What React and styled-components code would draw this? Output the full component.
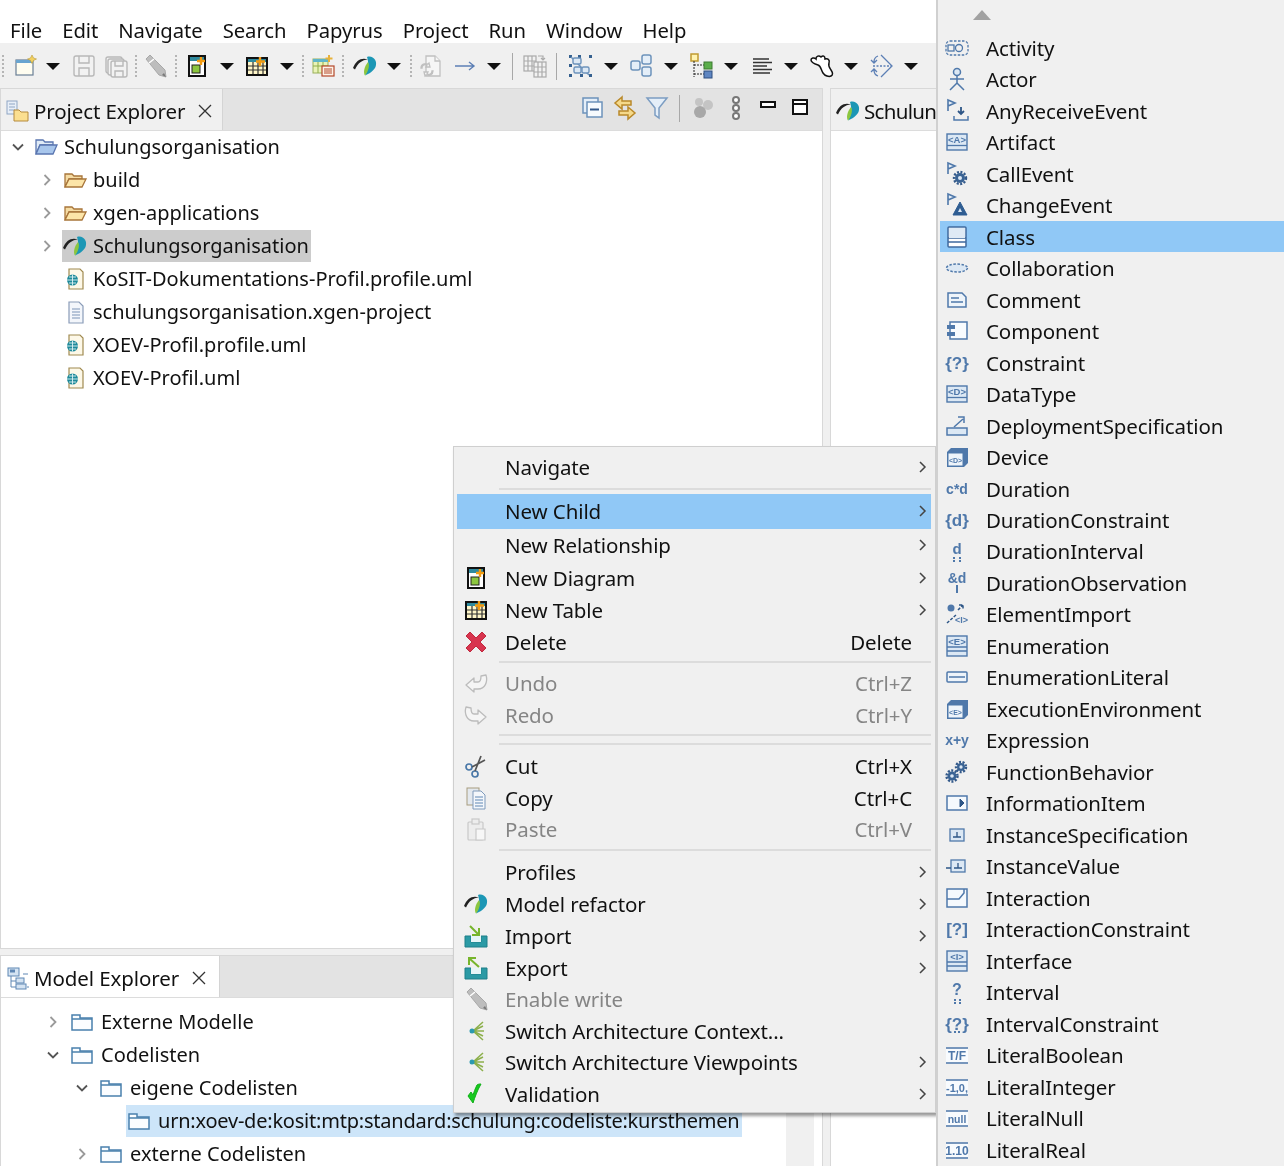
import React from 'react';
import styled, { createGlobalStyle } from 'styled-components';

const GlobalStyle = createGlobalStyle`
  html, body { margin: 0; padding: 0; background: #fff; }
  body { font-family: "Noto Sans", "Open Sans", sans-serif; color: #111; }
`;

const Page = styled.div`
  position: relative;
  width: 1284px;
  height: 1166px;
  overflow: hidden;
  background: #fff;
  font-size: 20.5px;
  letter-spacing: -0.1px;
  display: flex;
  flex-direction: column;
  filter: blur(0.35px);
`;

const MenuBar = styled.div`
  height: 43px;
  box-sizing: border-box;
  padding: 14.5px 0 0 10px;
  display: flex;
  gap: 20px;
  line-height: 30px;
  font-size: 20.25px;
  letter-spacing: -0.05px;
`;

const ToolBar = styled.div`
  height: 45px;
  box-sizing: border-box;
  padding-top: 1px;
  background: #f0f0f0;
  display: flex;
  align-items: center;
  flex: none;
`;

const Slot = styled.div`
  width: 0;
  margin-left: ${(p) => p.$dx}px;
  display: flex;
  justify-content: center;
  align-items: center;
`;

const Grip = styled.div`
  flex: none;
  height: 22px;
  border-left: 2px dotted #b5b5b5;
`;

const ToolSep = styled.div`
  flex: none;
  height: 27px;
  border-left: 1px solid #a8a8a8;
`;

const DropArrow = styled.div`
  flex: none;
  border-left: 7px solid transparent;
  border-right: 7px solid transparent;
  border-top: 7px solid #111;
`;

const Workbench = styled.div`
  flex: 1;
  min-height: 0;
  background: #f0f0f0;
  display: flex;
  gap: 7px;
`;

const LeftColumn = styled.div`
  width: 823px;
  flex: none;
  display: flex;
  flex-direction: column;
  gap: 6px;
`;

const Panel = styled.div`
  flex: ${(p) => p.$flex || 'none'};
  height: ${(p) => (p.$h ? `${p.$h}px` : 'auto')};
  background: #fff;
  border: 1px solid #d8d8d8;
  border-bottom: ${(p) => (p.$open ? 'none' : '1px solid #d8d8d8')};
  box-sizing: border-box;
  display: flex;
  flex-direction: column;
  min-height: 0;
`;

const TabBar = styled.div`
  height: 41px;
  flex: none;
  background: #e3e3e3;
  border-bottom: 1px solid #dcdcdc;
  display: flex;
  align-items: stretch;
`;

const Tab = styled.div`
  width: ${(p) => p.$w}px;
  flex: none;
  box-sizing: border-box;
  background: ${(p) => p.$bg || '#f0f0f0'};
  border-right: 1px solid #d4d4d4;
  padding: 2px 0 0 ${(p) => p.$pad || 4}px;
  display: flex;
  align-items: center;
  gap: 4px;
  white-space: nowrap;
  overflow: hidden;
  letter-spacing: ${(p) => p.$ls || -0.1}px;
`;

const ViewTools = styled.div`
  flex: 1;
  display: flex;
  align-items: center;
  margin-top: -3px;
`;

const CloseX = styled.svg`
  width: 16px;
  height: 16px;
  margin-left: 8px;
  flex: none;
`;

const TreeBody = styled.div`
  flex: 1;
  min-height: 0;
  display: flex;
`;

const Tree = styled.div`
  flex: 1;
  min-width: 0;
  margin-top: ${(p) => p.$top}px;
  font-size: 20px;
  letter-spacing: 0;
`;

const ScrollTrack = styled.div`
  width: 28px;
  margin-right: 8px;
  flex: none;
  background: #f0f0f0;
`;

const Row = styled.div`
  height: 33px;
  display: flex;
  align-items: center;
  padding-left: ${(p) => p.$x}px;
  white-space: nowrap;
`;

const Twist = styled.div`
  width: 18px;
  height: 18px;
  flex: none;
  margin-right: ${(p) => p.$gap}px;
  display: flex;
  align-items: center;
  justify-content: center;
`;

const Label = styled.div`
  display: flex;
  align-items: center;
  gap: ${(p) => p.$gap}px;
  height: 32px;
  padding: 0 ${(p) => (p.$sel ? 2 : 0)}px 0 ${(p) => (p.$sel ? 1 : 0)}px;
  margin-left: ${(p) => (p.$sel ? -1 : 0)}px;
  background: ${(p) => p.$sel || 'transparent'};
  letter-spacing: ${(p) => p.$ls || 0}px;
`;

const ContextMenu = styled.div`
  position: absolute;
  left: 453px;
  top: 446px;
  width: 483px;
  height: 667px;
  box-sizing: border-box;
  padding: 5px 4px 0 3px;
  background: #f0f0f0;
  border: 1px solid #cfcfcf;
  box-shadow: 2px 3px 3px rgba(0, 0, 0, 0.4);
`;

const MenuRow = styled.div`
  height: ${(p) => p.$h}px;
  box-sizing: border-box;
  padding: 0 3px 1.5px 0;
  display: flex;
  align-items: center;
  background: ${(p) => (p.$active ? '#90c8f6' : 'transparent')};
  color: ${(p) => (p.$off ? '#858585' : '#111')};
`;

const MenuIcon = styled.div`
  width: 38px;
  margin-right: 10px;
  flex: none;
  display: flex;
  justify-content: center;
  align-items: center;
`;

const MenuText = styled.div`
  flex: 1;
  white-space: nowrap;
`;

const Shortcut = styled.div`
  margin-right: 16px;
  white-space: nowrap;
`;

const SubArrow = styled.svg`
  width: 10px;
  height: 14px;
  flex: none;
`;

const MenuSep = styled.div`
  height: ${(p) => p.$h}px;
  box-sizing: border-box;
  padding: ${(p) => p.$top}px 0 0 42px;
  &::after {
    content: '';
    display: block;
    height: 2px;
    background: #dcdcdc;
  }
`;

const SubMenu = styled.div`
  position: absolute;
  left: 936px;
  top: 0;
  right: 0;
  bottom: 0;
  background: #f0f0f0;
  border-left: 2px solid #d0d0d0;
  box-sizing: border-box;
`;

const ScrollUp = styled.div`
  height: 32px;
  padding: 10px 0 0 35px;
  box-sizing: border-box;
  &::before {
    content: '';
    display: block;
    width: 0;
    border-left: 9px solid transparent;
    border-right: 9px solid transparent;
    border-bottom: 10px solid #a2a2a2;
  }
`;

const SubItem = styled.div`
  height: 31.49px;
  display: flex;
  align-items: center;
  margin-left: 2px;
  padding-left: 5px;
  gap: 17px;
  white-space: nowrap;
  background: ${(p) => (p.$active ? '#90c8f6' : 'transparent')};
`;

const Ico = styled.svg.attrs((p) => ({ viewBox: `0 0 ${p.$s || 24} ${p.$s || 24}`, width: p.$s || 24, height: p.$s || 24 }))`
  flex: none;
  display: block;
  overflow: visible;
`;

const B = '#4f78aa';
const L = '#dce8f4';

const GlyphText = styled.text`
  font-family: "Liberation Sans", sans-serif;
  font-weight: 700;
  fill: ${B};
  text-anchor: middle;
  letter-spacing: 0;
`;

const Logo = () => (
  <g>
    <path d="M0 14C3 6 9 3 15 5.500C9 6 5 9 2 15.500z" fill="#222" />
    <path d="M14 3C20 1 25 7 22.500 13C20.500 17 16 20 12 21.500C15.500 15 16 9 14 3z" fill="#1c97b5" />
    <path d="M12 21.500C10 19 11 13 15 8C17 11 15.500 17 12 21.500z" fill="#8cc63f" />
  </g>
);

const NewWizard = () => (
  <g>
    <rect x="3" y="6" width="17" height="15" fill="#fffdf0" stroke="#6a7f96" strokeWidth="1.2" />
    <rect x="3" y="6" width="17" height="3" fill="#6aa5d0" />
    <path d="M19 1l1.5 3 3 1-3 1.500-1.500 3-1.500-3-3-1.500 3-1z" fill="#f3d060" stroke="#b79a3a" strokeWidth=".6" />
  </g>
);

const NewDiagram = () => (
  <g>
    <rect x="4" y="2" width="16" height="20" fill="#fff" stroke="#111" strokeWidth="2" />
    <rect x="5" y="3" width="14" height="4" fill="#2f8a9e" />
    <rect x="7" y="11" width="8" height="8" fill="#8cc63f" stroke="#222" />
    <path d="M16 3v8M12 7h8" stroke="#f39c12" strokeWidth="2.4" />
  </g>
);

const NewTable = () => (
  <g>
    <rect x="2" y="4" width="20" height="17" fill="#fff6c8" stroke="#111" strokeWidth="2" />
    <rect x="3" y="5" width="18" height="3" fill="#2f8a9e" />
    <path d="M3 12h18M3 16h18M8 8v12M13 8v12M18 8v12" stroke="#333" strokeWidth="1.2" />
    <path d="M15 3v9M11 7.500h9" stroke="#f39c12" strokeWidth="2.4" />
  </g>
);

const TablePlus = () => (
  <g>
    <rect x="2" y="5" width="15" height="14" fill="#eaf3b8" stroke="#9ab05a" />
    <rect x="2" y="5" width="15" height="3" fill="#5fb5c8" />
    <path d="M2 12h15M7 8v11M12 8v11" stroke="#8fae4a" />
    <rect x="11" y="12" width="12" height="10" fill="#fdf3e8" stroke="#b5482a" strokeWidth="1.2" />
    <path d="M13 15h8M13 17h8M13 19h8" stroke="#b5482a" />
    <path d="M18 1v7M14.500 4.500h7" stroke="#e8b23a" strokeWidth="2" />
  </g>
);

const SaveIcon = ({ stack }) => (
  <g fill="#f2f2f2" stroke="#b8b8b8" strokeWidth="1.4">
    {stack && <rect x="1" y="3" width="16" height="16" rx="2" />}
    {stack && <rect x="3" y="5" width="16" height="16" rx="2" />}
    <rect x={stack ? 6 : 2} y={stack ? 7 : 2} width={stack ? 16 : 20} height={stack ? 16 : 20} rx="2" />
    <path d={stack ? 'M10 7v5h8V7M10 23v-6h8v6' : 'M7 2v7h10V2M7 22v-8h10v8'} fill="none" />
  </g>
);

const Pencil = () => (
  <g>
    <path d="M3 5l4-4 15 15 1 7-7-2z" fill="#bdbdbd" stroke="#a8a8a8" />
    <path d="M6 9l5-4" stroke="#fff" strokeWidth="1.5" />
    <path d="M19 21l4 2-2-4z" fill="#777" />
  </g>
);

const DocGhost = () => (
  <g fill="#f6f6f6" stroke="#c0c0c0" strokeWidth="1.3">
    <path d="M7 2h9l5 5v15H7z" />
    <path d="M16 2v5h5" />
    <path d="M3 14c0-3 3-4 5-3l-1 2 4 0-1-4-1 1c-3-1-7 0-7 4zM13 17c0 3-3 4-5 3l1-2-4 0 1 4 1-1c3 1 7 0 7-4z" />
  </g>
);

const ArrowRightThin = () => (
  <path d="M2 12h19M16 8l5 4-5 4" fill="none" stroke="#5c7fb5" strokeWidth="1.4" />
);

const Compare = () => (
  <g fill="#f2f2f2" stroke="#aaa" strokeWidth="1.2">
    <rect x="1" y="2" width="12" height="15" />
    <path d="M1 7h12M1 12h12M5 2v15M9 2v15" />
    <rect x="11" y="8" width="12" height="15" />
    <path d="M11 13h12M11 18h12M15 8v15M19 8v15" />
    <path d="M15 2h5v4M18 4l2 2 2-2" fill="none" />
  </g>
);

const Cluster = () => (
  <g>
    <g fill="#35608f">
      <rect x="1" y="1" width="3" height="3" /><rect x="10" y="1" width="3" height="3" /><rect x="21" y="1" width="3" height="3" />
      <rect x="1" y="10" width="3" height="3" /><rect x="21" y="20" width="3" height="3" />
      <rect x="1" y="20" width="3" height="3" /><rect x="12" y="20" width="3" height="3" />
    </g>
    <g fill="#dce8f4" stroke="#6c92bb" strokeWidth="1.4">
      <path d="M3 3l18 18" />
      <rect x="5" y="4" width="8" height="6" rx="1.500" />
      <rect x="6" y="13" width="7" height="6" rx="1.500" />
      <rect x="14" y="13" width="7" height="6" rx="1.500" />
    </g>
  </g>
);

const Boxes = () => (
  <g fill="#e4eef8" stroke="#6c92bb" strokeWidth="1.5">
    <rect x="1" y="7" width="9" height="9" rx="2" />
    <rect x="12" y="1" width="9" height="9" rx="2" />
    <rect x="12" y="13" width="9" height="9" rx="2" />
  </g>
);

const TreeLayout = () => (
  <g>
    <rect x="1" y="0" width="7" height="7" fill="#fff3b0" stroke="#c09a30" strokeWidth="1.5" />
    <path d="M4 7v16M4 11h10M4 20h10" stroke="#222" strokeDasharray="2 1" />
    <rect x="14" y="8" width="8" height="7" fill="#5bae4a" stroke="#3c7a30" />
    <rect x="14" y="17" width="8" height="7" fill="#5f86c2" stroke="#2f4f80" />
  </g>
);

const Lines = () => (
  <path d="M3 5h16M3 8.500h19M3 12h14M3 15.500h19M3 19h17" stroke="#333" strokeWidth="1.4" fill="none" />
);

const Ghost = () => (
  <path d="M1 6c0-2 3-3 5-1 0-3 3-4 5-2 2-2 4-1 4 2 3-1 5 1 4 4s0 4 2 7 2 5 0 6-6 0-8-3-2-7-5-8-7-3-7-5z" fill="#fff" stroke="#111" strokeWidth="1.500" />
);

const DiamondFlow = () => (
  <g fill="none" stroke="#5c7fb5" strokeWidth="1.3">
    <path d="M11 1l11 11-11 11" />
    <path d="M3 12h18" strokeDasharray="2 1.500" />
    <path d="M8 2c-3 1-4 3-4 6M1 6l3 3 3-3M8 22c-3-1-4-3-4-6M1 18l3-3 3 3" />
  </g>
);

const Collapse = () => (
  <g fill="#e4eef8" stroke="#6c92bb" strokeWidth="1.5">
    <rect x="2" y="2" width="15" height="15" />
    <rect x="6" y="6" width="15" height="15" fill="#f6fafd" />
    <path d="M9 13.500h9" stroke="#33598a" strokeWidth="2" />
  </g>
);

const LinkArrows = () => (
  <g fill="#f5d98a" stroke="#b9892a" strokeWidth="1.5">
    <path d="M9 1L2 7l7 6V9h9V5H9z" />
    <path d="M15 11l7 6-7 6v-4H6v-4h9z" />
  </g>
);

const Funnel = () => (
  <path d="M2 2h20l-8 10v10l-4-3v-7z" fill="#e4eef8" stroke="#7c9dc2" strokeWidth="1.5" />
);

const GrayBalls = () => (
  <g fill="#a8a8a8">
    <circle cx="8" cy="6" r="4" fill="#c4c4c4" /><circle cx="17" cy="9" r="5" fill="#c4c4c4" /><circle cx="9" cy="16" r="6" />
  </g>
);

const Chain = () => (
  <g fill="#fff" stroke="#777" strokeWidth="2">
    <circle cx="12" cy="4" r="3" /><circle cx="12" cy="12" r="3" /><circle cx="12" cy="20" r="3" />
  </g>
);

const MinBtn = () => <rect x="5" y="6" width="14" height="5" fill="#fff" stroke="#111" strokeWidth="2" />;
const MaxBtn = () => (
  <g fill="#fff" stroke="#111" strokeWidth="2">
    <rect x="4" y="4" width="14" height="14" />
    <path d="M4 8h14" />
  </g>
);

const ExplorerIcon = () => (
  <g>
    <rect x="1" y="2" width="10" height="13" fill="#e8eff8" stroke="#8fa6c4" />
    <path d="M3 5h6M3 8h6M3 11h6" stroke="#8fa6c4" />
    <path d="M8 11h5l2 2h7v9H8z" fill="#fbdf90" stroke="#b58a3c" />
  </g>
);

const ModelIcon = () => (
  <g>
    <rect x="2" y="2" width="11" height="8" fill="#d4e3f2" stroke="#5f87b4" />
    <rect x="4" y="3.500" width="5" height="3" fill="#5f87b4" />
    <path d="M5 10v11h5M5 15h5" stroke="#5f87b4" fill="none" />
    <rect x="10" y="12" width="8" height="5" fill="#d4e3f2" stroke="#5f87b4" />
    <rect x="10" y="18" width="10" height="5" fill="#d4e3f2" stroke="#5f87b4" />
    <path d="M17 8h5M21 21h2" stroke="#5f87b4" />
  </g>
);

const FolderOpen = () => (
  <g>
    <path d="M2 6h7l2 2h8v3H6L2 19z" fill="#f5dca4" stroke="#a8753a" strokeWidth="1.3" />
    <path d="M6 11h17l-4 8H2z" fill="#fce5a8" stroke="#a8753a" strokeWidth="1.3" />
  </g>
);

const FolderBlueOpen = () => (
  <g>
    <path d="M2 5h7l2 2h8v3H6l-4 9z" fill="#e0ebf7" stroke="#5a76b0" strokeWidth="1.3" />
    <path d="M6 10h17l-4 9H2z" fill="#a8c6ec" stroke="#5a76b0" strokeWidth="1.3" />
  </g>
);

const FolderPlain = () => (
  <g>
    <path d="M2 5h8v3h12v12H2z" fill="#fbfdff" stroke="#4a80ad" strokeWidth="1.5" />
    <path d="M2 9h20" stroke="#4a80ad" strokeWidth="1.5" />
  </g>
);

const UmlFile = () => (
  <g>
    <path d="M6 2h11l3 3v17H6z" fill="#fdf8e8" stroke="#a08a50" strokeWidth="1.2" />
    <circle cx="9.500" cy="13" r="5.500" fill="#1f8a9a" />
    <path d="M4 13h11M9.500 7.500v11M6 10h7M6 16h7" stroke="#dff3f5" strokeWidth=".9" />
  </g>
);

const TextFile = () => (
  <g>
    <path d="M6 2h10l4 4v17H6z" fill="#f3f6fb" stroke="#8a9cb8" strokeWidth="1.2" />
    <path d="M9 9h8M9 12h8M9 15h8M9 18h8" stroke="#7d94b8" strokeWidth="1.2" />
  </g>
);

const DeleteX = () => (
  <path d="M6 2l6 6 6-6 4 4-6 6 6 6-4 4-6-6-6 6-4-4 6-6-6-6z" fill="#d8344e" stroke="#c0283e" strokeWidth="1" strokeLinejoin="round" />
);

const UndoArrow = () => (
  <path d="M2 14l8-7v4h4c2 0 3-2 3-6l5-1c2 7-1 14-8 14h-4v3z" fill="#f5f5f5" stroke="#bcbcbc" strokeWidth="1.3" strokeLinejoin="round" />
);

const RedoArrow = () => (
  <path d="M22 14l-8-7v4h-4c-2 0-3-2-3-6L2 4c-2 7 1 14 8 14h4v3z" fill="#f5f5f5" stroke="#bcbcbc" strokeWidth="1.3" strokeLinejoin="round" />
);

const Scissors = () => (
  <g fill="none" stroke="#4a78a8" strokeWidth="1.7">
    <circle cx="5" cy="13" r="3" />
    <circle cx="11" cy="20" r="3" />
    <path d="M8 13l13-7M11 17l6-15" stroke="#555" />
  </g>
);

const CopyIcon = () => (
  <g>
    <rect x="3" y="2" width="12" height="17" fill="#e3e8ee" stroke="#a79c7e" />
    <path d="M9 5h8l4 4v14H9z" fill="#f4f7fb" stroke="#7e9abb" />
    <path d="M11 11h8M11 14h8M11 17h8M11 20h8" stroke="#5f87b4" />
  </g>
);

const PasteIcon = () => (
  <g fill="#ededed" stroke="#c8c8c8" strokeWidth="1.2">
    <rect x="4" y="5" width="15" height="18" rx="1" />
    <rect x="8" y="2" width="7" height="5" />
    <path d="M12 12h9v11h-9z" fill="#f7f7f7" />
  </g>
);

const Tray = ({ up }) => (
  <g>
    <path d="M1 12h6v6h10v-6h6v11H1z" fill="#2b9aa5" stroke="#1f7e88" />
    <rect x="7" y="12" width="10" height="6" fill="#e6f5f7" />
    {up ? (
      <path d="M15 11L6 3M5 9V2h7" fill="none" stroke="#77b52c" strokeWidth="2" />
    ) : (
      <path d="M6 2l8 8M8 11h7V4" fill="none" stroke="#77b52c" strokeWidth="2" />
    )}
  </g>
);

const Switcher = () => (
  <g stroke="#8db04c" strokeWidth="1.6" fill="none">
    <path d="M9 12L19 3M9 12l10-5M9 12h11M9 12l10 5M9 12l10 9" />
    <circle cx="8" cy="12" r="2.500" fill="#2c9ab0" stroke="none" />
  </g>
);

const CheckMark = () => (
  <path d="M4 14l5 7c2-6 4-12 8-19-1 0-3 0-4 1-2 4-3 7-4 10l-2-3z" fill="#16c91e" stroke="#10b018" strokeWidth="1" />
);

const Flag = () => <path d="M3 1v11M3 1l7 3-7 3z" fill="#e5edf6" stroke={B} strokeWidth="1.6" />;

const Gear = ({ cx, cy, r }) => (
  <g>
    <circle cx={cx} cy={cy} r={r} fill="none" stroke="#33598a" strokeWidth="2.4" strokeDasharray="2 1.500" />
    <circle cx={cx} cy={cy} r={r - 1} fill="#3a6394" />
    <circle cx={cx} cy={cy} r={r / 3} fill="#dce8f4" />
  </g>
);

const CodeBox = ({ ch, line, lines }) => (
  <g>
    <rect x="2" y={lines ? 2 : 4} width="20" height={lines ? 20 : 16} fill={L} stroke={B} strokeWidth="1.4" />
    <GlyphText x="12" y={lines ? 11 : 13} fontSize="9.500">{`<${ch}>`}</GlyphText>
    {line && <path d={lines ? 'M2 13h20M2 17h20' : 'M2 15.500h20'} stroke={B} strokeWidth="1.3" />}
  </g>
);

const Box3d = ({ ch }) => (
  <g>
    <path d="M2 7l4-4h17v15l-4 4H2z" fill={B} />
    <rect x="3" y="8" width="15" height="13" fill="#eef4fa" stroke={B} />
    <GlyphText x="10.500" y="17.500" fontSize="7">{`<${ch}>`}</GlyphText>
  </g>
);

const Word = ({ t, size = 10, y = 16 }) => <GlyphText x="12" y={y} fontSize={size}>{t}</GlyphText>;

const Ruled = ({ t, size = 8.500 }) => (
  <g>
    <path d="M1 5h22M1 20h22" stroke={B} strokeWidth="1.500" />
    <rect x="1" y="6" width="22" height="13" fill="#f8fbfe" />
    <GlyphText x="12" y="16.500" fontSize={size}>{t}</GlyphText>
  </g>
);

const subIcons = {
  Activity: (
    <g fill="none" stroke={B} strokeWidth="1.3">
      <rect x="1" y="5" width="22" height="14" rx="4" strokeDasharray="2.500 1.500" />
      <rect x="3" y="9" width="6" height="6" />
      <circle cx="14" cy="12" r="3.500" />
    </g>
  ),
  Actor: (
    <g fill="none" stroke={B} strokeWidth="1.500">
      <circle cx="12" cy="5" r="3.500" fill={L} />
      <path d="M12 9v7M5 12h14M5 23l7-7 7 7" />
    </g>
  ),
  AnyReceiveEvent: (
    <g>
      <Flag />
      <path d="M16 8v7M13 12l3 3 3-3" fill="none" stroke="#2d5586" strokeWidth="1.800" />
      <path d="M9 17v4h14v-4" fill="none" stroke={B} strokeWidth="1.500" />
    </g>
  ),
  Artifact: <CodeBox ch="A" line />,
  CallEvent: (
    <g>
      <Flag />
      <Gear cx={15} cy={16} r={6} />
    </g>
  ),
  ChangeEvent: (
    <g>
      <Flag />
      <path d="M15 9l7 13H8z" fill="#2f5d92" stroke="#2f5d92" />
      <path d="M15 15l2 4h-4z" fill={L} />
    </g>
  ),
  Class: (
    <g>
      <rect x="3" y="2" width="18" height="20" rx="1" fill="#fff" stroke="#3f6a9e" strokeWidth="1.500" />
      <path d="M3 13h18M3 17h18" stroke="#3f6a9e" strokeWidth="1.300" />
      <rect x="4" y="3" width="16" height="10" fill="#dfeaf5" />
    </g>
  ),
  Collaboration: <ellipse cx="12" cy="12" rx="10.500" ry="4" fill={L} stroke={B} strokeWidth="1.500" strokeDasharray="2.500 1.500" />,
  Comment: (
    <g>
      <path d="M3 5h14l4 4v10H3z" fill="#eef4fa" stroke={B} strokeWidth="1.500" />
      <path d="M6 10h8M6 14h12" stroke={B} strokeWidth="1.300" />
    </g>
  ),
  Component: (
    <g>
      <rect x="5" y="3" width="17" height="17" fill="#f8fbfe" stroke={B} strokeWidth="1.500" />
      <rect x="2" y="6" width="8" height="4" fill={B} />
      <rect x="2" y="13" width="8" height="4" fill={B} />
    </g>
  ),
  Constraint: <Word t="{?}" size={17} y={18} />,
  DataType: <CodeBox ch="D" line />,
  DeploymentSpecification: (
    <g fill="none" stroke={B} strokeWidth="1.500">
      <path d="M2 14h20v7H2z" fill={L} />
      <path d="M9 13l9-8M13 3h6v6" />
    </g>
  ),
  Device: <Box3d ch="D" />,
  Duration: <Word t="c*d" size={14} y={17} />,
  DurationConstraint: <Word t="{d}" size={17} y={18} />,
  DurationInterval: (
    <g>
      <Word t="d" size={15} y={15} />
      <path d="M8 19h2M14 19h2M8 22h2M14 22h2" stroke={B} strokeWidth="2" />
    </g>
  ),
  DurationObservation: (
    <g>
      <Word t="&d" size={14} y={12} />
      <path d="M12 14v8" stroke={B} strokeWidth="2" />
    </g>
  ),
  ElementImport: (
    <g>
      <circle cx="6" cy="6" r="3.500" fill={B} />
      <path d="M13 8l5-5M14 3h4v4M2 21l9-8" fill="none" stroke="#2d5586" strokeWidth="1.500" strokeDasharray="3 1.500" />
      <GlyphText x="16.500" y="21" fontSize="9">{'<I>'}</GlyphText>
    </g>
  ),
  Enumeration: <CodeBox ch="E" line lines />,
  EnumerationLiteral: (
    <g>
      <rect x="2" y="7" width="20" height="10" rx="1" fill="#eef4fa" stroke={B} strokeWidth="1.500" />
      <path d="M4 12h16" stroke={B} strokeWidth="1.500" />
    </g>
  ),
  ExecutionEnvironment: <Box3d ch="E" />,
  Expression: <Word t="x+y" size={14} y={17} />,
  FunctionBehavior: (
    <g>
      <Gear cx={16} cy={7} r={5} />
      <Gear cx={7} cy={16} r={5.500} />
    </g>
  ),
  InformationItem: (
    <g>
      <rect x="2" y="5" width="20" height="14" fill="#f5f9fd" stroke={B} strokeWidth="1.500" />
      <path d="M15 8l4 4-4 4z" fill="#2d5586" stroke="#2d5586" />
    </g>
  ),
  InstanceSpecification: (
    <g>
      <rect x="5" y="6" width="14" height="12" fill={L} stroke={B} strokeWidth="1.300" />
      <path d="M12 9v5M8 14h8" stroke="#2d5586" strokeWidth="1.300" />
    </g>
  ),
  InstanceValue: (
    <g>
      <rect x="6" y="6" width="14" height="12" fill={L} stroke={B} strokeWidth="1.300" />
      <path d="M13 9v5M9 14h8M1 14h5" stroke="#2d5586" strokeWidth="1.300" />
    </g>
  ),
  Interaction: (
    <g>
      <rect x="2" y="3" width="20" height="18" fill="#f5f9fd" stroke={B} strokeWidth="1.500" />
      <path d="M2 13h12l5-6V3" fill="none" stroke={B} strokeWidth="1.500" />
    </g>
  ),
  InteractionConstraint: <Word t="[?]" size={17} y={18} />,
  Interface: <CodeBox ch="I" line lines />,
  Interval: (
    <g>
      <Word t="?" size={16} y={15} />
      <path d="M9 20h2M14 20h2M9 23h2M14 23h2" stroke={B} strokeWidth="2" />
    </g>
  ),
  IntervalConstraint: (
    <g>
      <Word t="{?}" size={17} y={18} />
      <path d="M9 20h2M13 20h2" stroke={B} strokeWidth="2" />
    </g>
  ),
  LiteralBoolean: <Ruled t="T/F" size={12} />,
  LiteralInteger: <Ruled t="-1,0," size={11} />,
  LiteralNull: <Ruled t="null" size={10.500} />,
  LiteralReal: <Ruled t="1.10" size={12} />,
};

const subItems = Object.keys(subIcons);

const menuNames = ['File', 'Edit', 'Navigate', 'Search', 'Papyrus', 'Project', 'Run', 'Window', 'Help'];

// centre x of every toolbar part
const tools = [
  [3, 'grip'], [25, <NewWizard />], [53, 'drop'], [84, <SaveIcon />], [117, <SaveIcon stack />], [136, 'grip'],
  [155, <Pencil />], [176, 'grip'], [197, <NewDiagram />], [227, 'drop'], [257, <NewTable />], [287, 'drop'],
  [303, 'grip'], [323, <TablePlus />], [343, 'grip'], [365, <Logo />], [394, 'drop'], [411, 'grip'],
  [431, <DocGhost />], [465, <ArrowRightThin />], [494, 'drop'], [512, 'sep'], [535, <Compare />], [556, 'sep'],
  [580, <Cluster />], [611, 'drop'], [642, <Boxes />], [671, 'drop'], [702, <TreeLayout />], [731, 'drop'],
  [762, <Lines />], [791, 'drop'], [822, <Ghost />], [851, 'drop'], [882, <DiamondFlow />], [911, 'drop'],
];

const viewTools = [
  [592, <Collapse />], [624, <LinkArrows />], [656, <Funnel />], [678, 'sep'], [702, <GrayBalls />],
  [735, <Chain />], [767, <MinBtn />], [800, <MaxBtn />],
];

const renderPart = (part) => {
  if (part === 'grip') return <Grip />;
  if (part === 'drop') return <DropArrow />;
  if (part === 'sep') return <ToolSep />;
  return <Ico>{part}</Ico>;
};

const renderTools = (list, start) => {
  let prev = start;
  return list.map(([x, part]) => {
    const dx = x - prev;
    prev = x;
    return <Slot key={x} $dx={dx}>{renderPart(part)}</Slot>;
  });
};

const Close = () => (
  <CloseX viewBox="0 0 16 16">
    <path d="M2 2l12 12M14 2L2 14" stroke="#333" strokeWidth="1.300" />
  </CloseX>
);

const Chevron = ({ open }) => (
  <svg width="14" height="14" viewBox="0 0 14 14">
    <path d={open ? 'M2 4.500l5 5 5-5' : 'M4.500 2l5 5-5 5'} fill="none" stroke={open ? '#555' : '#9a9a9a'} strokeWidth="1.800" />
  </svg>
);

const projectRows = [
  { x: 8, open: true, icon: <FolderBlueOpen />, text: 'Schulungsorganisation' },
  { x: 37, closed: true, icon: <FolderOpen />, text: 'build' },
  { x: 37, closed: true, icon: <FolderOpen />, text: 'xgen-applications' },
  { x: 37, closed: true, icon: <Logo />, text: 'Schulungsorganisation', sel: '#cccccc' },
  { x: 37, icon: <UmlFile />, text: 'KoSIT-Dokumentations-Profil.profile.uml' },
  { x: 37, icon: <TextFile />, text: 'schulungsorganisation.xgen-project' },
  { x: 37, icon: <UmlFile />, text: 'XOEV-Profil.profile.uml' },
  { x: 37, icon: <UmlFile />, text: 'XOEV-Profil.uml' },
];

const modelRows = [
  { x: 43, closed: true, text: 'Externe Modelle' },
  { x: 43, open: true, text: 'Codelisten' },
  { x: 72, open: true, text: 'eigene Codelisten' },
  { x: 100, text: 'urn:xoev-de:kosit:mtp:standard:schulung:codeliste:kursthemen', sel: '#cde5f9', ls: -0.22 },
  { x: 72, closed: true, text: 'externe Codelisten' },
];

const TreeRow = ({ row, folderIcon, twistGap, labelGap }) => (
  <Row $x={row.x}>
    <Twist $gap={twistGap}>
      {(row.open || row.closed) && <Chevron open={row.open} />}
    </Twist>
    <Label $gap={labelGap} $sel={row.sel} $ls={row.ls}>
      <Ico>{row.icon || folderIcon}</Ico>
      {row.text}
    </Label>
  </Row>
);

const contextItems = [
  { t: 'Navigate', h: 32, sub: true },
  { sep: 10, top: 4 },
  { t: 'New Child', h: 35, sub: true, active: true },
  { t: 'New Relationship', h: 34, sub: true },
  { t: 'New Diagram', h: 32, sub: true, icon: <NewDiagram /> },
  { t: 'New Table', h: 32, sub: true, icon: <NewTable /> },
  { t: 'Delete', h: 31, key: 'Delete', icon: <DeleteX /> },
  { sep: 10, top: 3 },
  { t: 'Undo', h: 32, key: 'Ctrl+Z', off: true, icon: <UndoArrow /> },
  { t: 'Redo', h: 31, key: 'Ctrl+Y', off: true, icon: <RedoArrow /> },
  { sep: 7, top: 3 },
  { sep: 13, top: 5 },
  { t: 'Cut', h: 32, key: 'Ctrl+X', icon: <Scissors /> },
  { t: 'Copy', h: 31, key: 'Ctrl+C', icon: <CopyIcon /> },
  { t: 'Paste', h: 32, key: 'Ctrl+V', off: true, icon: <PasteIcon /> },
  { sep: 10, top: 3 },
  { t: 'Profiles', h: 33, sub: true },
  { t: 'Model refactor', h: 32, sub: true, icon: <Logo /> },
  { t: 'Import', h: 32, sub: true, icon: <Tray /> },
  { t: 'Export', h: 31, sub: true, icon: <Tray up /> },
  { t: 'Enable write', h: 32, off: true, icon: <Pencil /> },
  { t: 'Switch Architecture Context...', h: 31, icon: <Switcher /> },
  { t: 'Switch Architecture Viewpoints', h: 32, sub: true, icon: <Switcher /> },
  { t: 'Validation', h: 32, sub: true, icon: <CheckMark /> },
];

const App = () => {
  return (
    <Page>
      <GlobalStyle />
      <MenuBar>
        {menuNames.map((m) => <div key={m}>{m}</div>)}
      </MenuBar>
      <ToolBar>{renderTools(tools, 0)}</ToolBar>
      <Workbench>
        <LeftColumn>
          <Panel $flex="1">
            <TabBar>
              <Tab $w={222} $pad={5}>
                <Ico><ExplorerIcon /></Ico>
                Project Explorer
                <Close />
              </Tab>
              <ViewTools>{renderTools(viewTools, 222)}</ViewTools>
            </TabBar>
            <Tree $top={-1}>
              {projectRows.map((row, i) => <TreeRow key={i} row={row} twistGap={7} labelGap={6} />)}
            </Tree>
          </Panel>
          <Panel $h={211} $open>
            <TabBar>
              <Tab $w={219} $bg="#ffffff" $pad={5}>
                <Ico><ModelIcon /></Ico>
                Model Explorer
                <Close />
              </Tab>
            </TabBar>
            <TreeBody>
              <Tree $top={7}>
                {modelRows.map((row, i) => (
                  <TreeRow key={i} row={row} folderIcon={<FolderPlain />} twistGap={8} labelGap={7} />
                ))}
              </Tree>
              <ScrollTrack />
            </TreeBody>
          </Panel>
        </LeftColumn>
        <Panel $flex="1" $open>
          <TabBar>
            <Tab $w={106} $pad={5} $ls={-0.7}>
              <Ico><Logo /></Ico>
              Schulun
            </Tab>
          </TabBar>
        </Panel>
      </Workbench>

      <ContextMenu>
        {contextItems.map((item, i) =>
          item.sep ? (
            <MenuSep key={i} $h={item.sep} $top={item.top} />
          ) : (
            <MenuRow key={item.t} $h={item.h} $active={item.active} $off={item.off}>
              <MenuIcon>{item.icon && <Ico>{item.icon}</Ico>}</MenuIcon>
              <MenuText>{item.t}</MenuText>
              {item.key && <Shortcut>{item.key}</Shortcut>}
              {item.sub && (
                <SubArrow viewBox="0 0 10 14">
                  <path d="M2 2l5 5-5 5" fill="none" stroke="#444" strokeWidth="1.500" />
                </SubArrow>
              )}
            </MenuRow>
          )
        )}
      </ContextMenu>

      <SubMenu>
        <ScrollUp />
        {subItems.map((name) => (
          <SubItem key={name} $active={name === 'Class'}>
            <Ico>{subIcons[name]}</Ico>
            {name}
          </SubItem>
        ))}
      </SubMenu>
    </Page>
  );
};

export default App;
